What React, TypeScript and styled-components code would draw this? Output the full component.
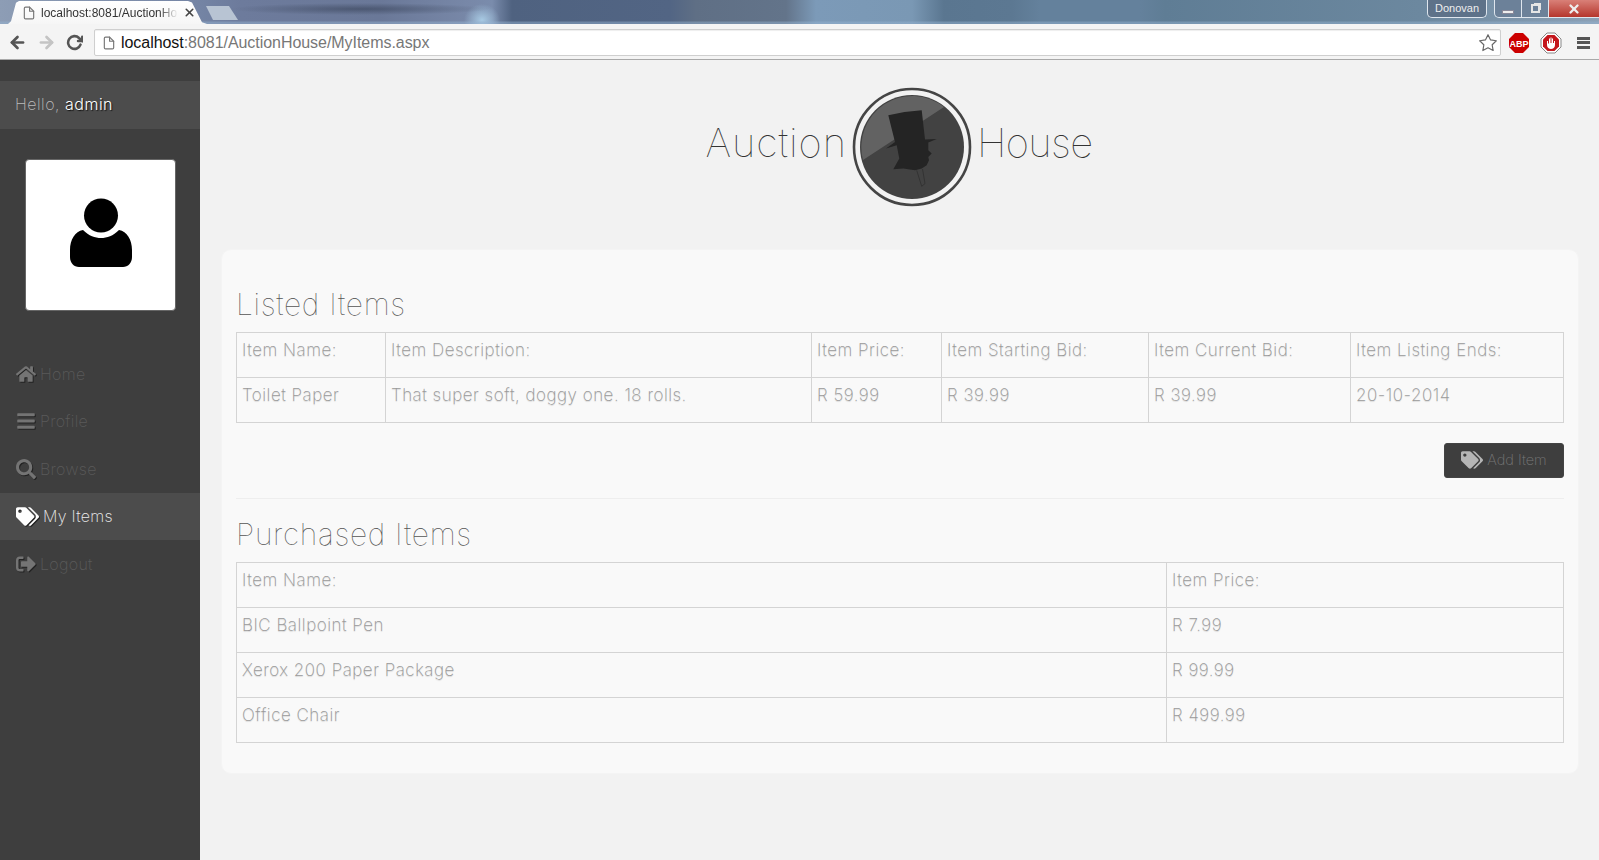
import React from "react";
import styled, { createGlobalStyle } from "styled-components";
import { FaHome, FaBars, FaSearch, FaTags, FaSignOutAlt } from "react-icons/fa";
import { FiArrowLeft, FiArrowRight, FiRotateCw, FiFile, FiStar, FiX } from "react-icons/fi";

const Global = createGlobalStyle`
  html, body { margin: 0; padding: 0; height: 860px; overflow: hidden; background: #f2f2f2; }
  body { font-family: "Inter", "Lato", "Liberation Sans", sans-serif; }
  * { box-sizing: border-box; }
`;
const Page = styled.div`display:flex;flex-direction:column;width:1599px;height:860px;`;
const TitleBar = styled.div`
  height:24px;display:flex;align-items:flex-end;padding-left:8px;
  background:
    linear-gradient(transparent 21px,rgba(150,180,210,.45) 22px),
    radial-gradient(ellipse 130px 6px at 360px 9px, rgba(45,55,75,.5), transparent),
    radial-gradient(ellipse 18px 16px at 482px 20px, rgba(170,205,230,.95), transparent),
    linear-gradient(90deg,#8d9db5 0px,#7484a4 200px,#6d7b9c 240px,#6a7898 380px,#7888a8 470px,#7a8cac 492px,#4f6280 512px,#526584 670px,#5f6f85 696px,#63748a 786px,#7c9ab8 816px,#7a98b4 912px,#5a7690 944px,#5c7892 1012px,#64819c 1040px,#64819c 1140px,#5f7d95 1165px,#6c889f 1420px,#8ca1b6 1599px);
`;
const Tab = styled.div`
  width:199px;height:23px;background:linear-gradient(#fff,#f6f6f6);display:flex;align-items:center;gap:5px;padding:0 0 0 14px;
  clip-path:polygon(0 100%,3px 88%,8px 8%,11px 0,180px 0,184px 6%,194px 92%,199px 100%);
  font:12px "Liberation Sans",sans-serif;color:#333;
`;
const TabLabel = styled.span`
  width:137px;overflow:hidden;white-space:nowrap;
  mask-image:linear-gradient(90deg,#000 118px,transparent 137px);
`;
const NewTab = styled.div`width:32px;height:14px;margin:0 0 4px -1px;background:#b8c4d3;clip-path:polygon(0 0,23px 0,32px 100%,7px 100%);`;
const WindowGroup = styled.div`margin-left:auto;align-self:flex-start;display:flex;gap:7px;`;
const UserBadge = styled.div`
  width:60px;height:18px;border:1px solid #dfe6ee;border-top:0;border-radius:0 0 5px 5px;background:#5e7289;color:#eee;
  font:11px "Liberation Sans",sans-serif;text-align:center;line-height:17px;
`;
const WinButtons = styled.div`display:flex;height:18px;`;
const WinBtn = styled.div<{ $w: number; $close?: boolean; $first?: boolean }>`
  width:${p => p.$w}px;border:1px solid #dfe6ee;border-top:0;border-right-width:${p => (p.$close ? 0 : 1)}px;border-left-width:${p => (p.$first ? 1 : 0)}px;display:flex;align-items:center;justify-content:center;color:#eee;
  background:${p => (p.$close ? "linear-gradient(#d98078,#b5362c)" : "#6c8199")};
  border-radius:${p => (p.$first ? "0 0 0 5px" : "0")};
`;
const MinGlyph = styled.div`width:12px;height:4px;background:#eee;margin-top:6px;border:1px solid #889;`;
const RestoreGlyph = styled.div`width:9px;height:9px;border:2px solid #e5e5e5;box-shadow:2px -2px 0 -1px #e5e5e5;`;
const Toolbar = styled.div`
  height:36px;display:flex;align-items:center;padding:2px 0 0 8px;background:#f4f4f4;border-bottom:1px solid #a9a9a9;
`;
const NavIcon = styled.span<{ $dim?: boolean }>`
  width:20px;margin-right:9px;display:flex;color:${p => (p.$dim ? "#c4c4c4" : "#555")};
`;
const Omnibox = styled.div`
  width:1407px;height:27px;margin-left:-1px;border:1px solid #cfcfcf;border-radius:2px;background:#fff;display:flex;align-items:center;padding:0 2px 0 7px;
  font:16px "Liberation Sans",sans-serif;letter-spacing:-.05px;color:#777;box-shadow:inset 0 1px 1px #eee;
`;
const Host = styled.span`color:#111;margin-left:5px;`;
const StarWrap = styled.span`margin-left:auto;display:flex;color:#666;`;
const Ext = styled.div`display:flex;align-items:center;margin-left:7px;gap:10px;`;
const Burger = styled.div`width:13px;height:12px;margin-left:5px;border-top:3px solid #555;border-bottom:3px solid #555;position:relative;&:after{content:"";position:absolute;left:0;right:0;top:1.5px;height:3px;background:#555;}`;
const Body = styled.div`flex:1;display:flex;min-height:0;`;
const Side = styled.aside`flex:0 0 200px;background:#3e3e3e;padding-top:21px;display:flex;flex-direction:column;`;
const Hello = styled.div`
  height:48px;background:#4c4c4c;color:#bbb;font-size:16px;font-weight:200;letter-spacing:.5px;line-height:46px;padding-left:15px;
  & b{font-weight:300;color:#fff;text-shadow:1px 1px 1px #111;}
`;
const Avatar = styled.div`
  width:151px;height:152px;margin:30px 0 0 25px;background:#fff;border-radius:4px;border:1px solid #666;display:flex;align-items:center;justify-content:center;padding-bottom:5px;
`;
const Nav = styled.nav`margin-top:39px;display:flex;flex-direction:column;`;
const NavItem = styled.div<{ $active?: boolean }>`
  height:47.5px;display:flex;align-items:center;padding-left:16px;gap:4px;font-size:16px;font-weight:200;letter-spacing:.3px;
  background:${p => (p.$active ? "#4c4c4c" : "transparent")};
  color:${p => (p.$active ? "#eee" : "#5a5a5a")};
  & svg{color:${p => (p.$active ? "#fff" : "#747474")};filter:drop-shadow(1px 1px 0 #222);}
`;
const Main = styled.main`flex:1;min-width:0;padding:26px 20px 0 21px;`;
const Logo = styled.div`display:flex;justify-content:center;align-items:center;height:121px;margin:0 2px 42px 0;gap:5px;`;
const LogoWord = styled.span<{ $ls: number }>`font-size:40px;font-weight:100;color:#333;margin-top:-8px;letter-spacing:${p => p.$ls}px;`;
const Card = styled.section`
  height:525px;background:#f9f9f9;border:1px solid #f4f4f4;border-radius:10px;padding:30px 14px 0 14px;
`;
const Heading = styled.h2`margin:0;font-size:30px;font-weight:100;color:#555;height:52px;line-height:48px;letter-spacing:.7px;`;
const Table = styled.table`width:1327px;border-collapse:collapse;table-layout:fixed;`;
const Cell = styled.td`
  height:45px;border:1px solid #d4d4d4;padding:7px 5px 0;vertical-align:top;color:#999;font-size:17px;font-weight:200;letter-spacing:.5px;line-height:21px;white-space:nowrap;text-shadow:0 1px 1px rgba(0,0,0,.14);
`;
const Actions = styled.div`display:flex;justify-content:flex-end;margin-top:20px;padding-bottom:20px;border-bottom:1px solid #eee;`;
const AddBtn = styled.button`
  width:120px;height:35px;background:#3e3e3e;border:1px solid #444;border-radius:3px;color:#777;font:200 14.5px "Inter",sans-serif;display:flex;align-items:center;justify-content:center;gap:4px;padding:0 0 2px;
  & svg{color:#b5b5b5;}
`;
const SecondHeading = styled(Heading)`margin-top:11px;`;

const listedCols = [149, 426, 130, 207, 202, 213];
const boughtCols = [930, 397];
const listed = [["Item Name:", "Item Description:", "Item Price:", "Item Starting Bid:", "Item Current Bid:", "Item Listing Ends:"],
  ["Toilet Paper", "That super soft, doggy one. 18 rolls.", "R 59.99", "R 39.99", "R 39.99", "20-10-2014"]];
const bought = [["Item Name:", "Item Price:"], ["BIC Ballpoint Pen", "R 7.99"], ["Xerox 200 Paper Package", "R 99.99"], ["Office Chair", "R 499.99"]];

const DataTable = ({ cols, rows }: { cols: number[]; rows: string[][] }) => (
  <Table>
    <colgroup>{cols.map((w, i) => <col key={i} width={w} />)}</colgroup>
    <tbody>{rows.map((r, i) => <tr key={i}>{r.map((c, j) => <Cell key={j}>{c}</Cell>)}</tr>)}</tbody>
  </Table>
);

const LogoMark = () => (
  <svg width="120" height="120" viewBox="0 0 120 120">
    <circle cx="60" cy="60" r="58" fill="#f2f2f2" stroke="#454545" strokeWidth="2.6" />
    <circle cx="60" cy="60" r="52" fill="#424242" />
    <path d="M11 73A51 51 0 0 1 92 20Z" fill="#626262" />
    <path d="M36.3 28.3Q52 24.5 69.7 23.3L73 52.6L84.7 52L76.3 55.6L76.3 63.3L79.7 66.6L76.3 70L77 73.3L74.7 78.3L69.7 81.6L63 83.3L51.3 81.6L41.3 82.3L47.3 71.6L44.7 58.3L34 61.6L43 55Z" fill="#242424" />
    <path d="M64.7 83.3L69.7 99.3L73 96.6L70.5 82" fill="none" stroke="#333" strokeWidth="1" />
  </svg>
);

const AvatarIcon = () => (
  <svg width="64" height="70" viewBox="0 0 64 70">
    <circle cx="32" cy="17.5" r="17" fill="#000" />
    <path d="M14 32C20 38 26 40 32 40S44 38 50 32C58 33 63 42 63 52V59C63 65 59 69 54 69H10C5 69 1 65 1 59V52C1 42 6 33 14 32Z" fill="#000" />
  </svg>
);

export default function App() {
  return (
    <Page>
      <Global />
      <TitleBar>
        <Tab><FiFile size={14} color="#777" /><TabLabel>localhost:8081/AuctionHo</TabLabel><FiX size={13} strokeWidth={3} color="#444" /></Tab>
        <NewTab />
        <WindowGroup>
          <UserBadge>Donovan</UserBadge>
          <WinButtons>
            <WinBtn $w={28} $first><MinGlyph /></WinBtn>
            <WinBtn $w={27}><RestoreGlyph /></WinBtn>
            <WinBtn $w={50} $close><FiX size={14} strokeWidth={4} /></WinBtn>
          </WinButtons>
        </WindowGroup>
      </TitleBar>
      <Toolbar>
        <NavIcon><FiArrowLeft size={19} strokeWidth={3.4} /></NavIcon>
        <NavIcon $dim><FiArrowRight size={19} strokeWidth={3.4} /></NavIcon>
        <NavIcon><FiRotateCw size={17} strokeWidth={3.6} /></NavIcon>
        <Omnibox>
          <FiFile size={14} color="#777" />
          <Host>localhost</Host>:8081/AuctionHouse/MyItems.aspx
          <StarWrap><FiStar size={20} strokeWidth={1.4} /></StarWrap>
        </Omnibox>
        <Ext>
          <svg width="22" height="22" viewBox="0 0 22 22">
            <polygon points="7,1 15,1 21,7 21,15 15,21 7,21 1,15 1,7" fill="#c00" />
            <text x="11" y="14.5" textAnchor="middle" fontSize="9" fontWeight="700" fontFamily="Liberation Sans" fill="#fff">ABP</text>
          </svg>
          <svg width="22" height="22" viewBox="0 0 22 22">
            <polygon points="7,1 15,1 21,7 21,15 15,21 7,21 1,15 1,7" fill="#fff" stroke="#888" />
            <polygon points="7.5,3 14.5,3 19,7.5 19,14.5 14.5,19 7.5,19 3,14.5 3,7.5" fill="#c4161c" />
            <path d="M7 9V13C7 15.5 9 17 11 17S15 15.5 15 13V9H14V11H13V6.5H12V11H11.5V5.5H10.5V11H10V6.5H9V11.5H8V9Z" fill="#fff" />
          </svg>
          <Burger />
        </Ext>
      </Toolbar>
      <Body>
        <Side>
          <Hello>Hello, <b>admin</b></Hello>
          <Avatar><AvatarIcon /></Avatar>
          <Nav>
            <NavItem><FaHome size={20} />Home</NavItem>
            <NavItem><FaBars size={20} />Profile</NavItem>
            <NavItem><FaSearch size={20} />Browse</NavItem>
            <NavItem $active><FaTags size={23} />My Items</NavItem>
            <NavItem><FaSignOutAlt size={20} />Logout</NavItem>
          </Nav>
        </Side>
        <Main>
          <Logo>
            <LogoWord $ls={.9}>Auction</LogoWord>
            <LogoMark />
            <LogoWord $ls={-.6}>House</LogoWord>
          </Logo>
          <Card>
            <Heading>Listed Items</Heading>
            <DataTable cols={listedCols} rows={listed} />
            <Actions><AddBtn><FaTags size={22} />Add Item</AddBtn></Actions>
            <SecondHeading>Purchased Items</SecondHeading>
            <DataTable cols={boughtCols} rows={bought} />
          </Card>
        </Main>
      </Body>
    </Page>
  );
}
